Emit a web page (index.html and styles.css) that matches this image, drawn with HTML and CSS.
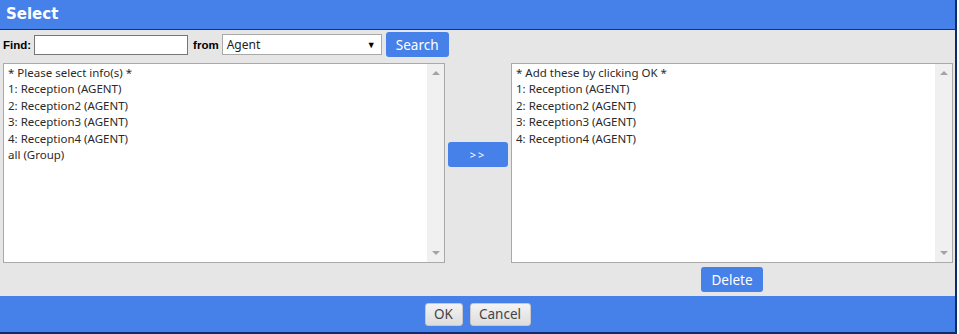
FILE: index.html
```html
<!DOCTYPE html>
<html lang="en">
<head>
    <meta charset="UTF-8">
    <title>Select</title>
    <link rel="stylesheet" href="styles.css">
</head>
<body class="page">
<div class="dialog">
    <div class="title">Select</div>
    <div class="body">
        <div class="find-row">
            <label class="lbl">Find:</label>
            <input class="find-input" type="text">
            <label class="lbl from">from</label>
            <div class="fake-select">
                <span>Agent</span>
                <span class="arrow">&#9660;</span>
            </div>
            <button class="btn-blue btn-search">Search</button>
        </div>
        <div class="lists">
            <div class="list">
                <div class="list-items">
                    <div>* Please select info(s) *</div>
                    <div>1: Reception (AGENT)</div>
                    <div>2: Reception2 (AGENT)</div>
                    <div>3: Reception3 (AGENT)</div>
                    <div>4: Reception4 (AGENT)</div>
                    <div>all (Group)</div>
                </div>
                <div class="scroll">
                    <span class="tri up"></span>
                    <span class="tri down"></span>
                </div>
            </div>
            <div class="middle">
                <button class="btn-blue btn-add">&gt;&gt;</button>
            </div>
            <div class="right-col">
                <div class="list">
                    <div class="list-items">
                        <div>* Add these by clicking OK *</div>
                        <div>1: Reception (AGENT)</div>
                        <div>2: Reception2 (AGENT)</div>
                        <div>3: Reception3 (AGENT)</div>
                        <div>4: Reception4 (AGENT)</div>
                    </div>
                    <div class="scroll">
                        <span class="tri up"></span>
                        <span class="tri down"></span>
                    </div>
                </div>
                <div class="delete-row">
                    <button class="btn-blue btn-delete">Delete</button>
                </div>
            </div>
        </div>
    </div>
    <div class="footer">
        <button class="btn-gray btn-ok">OK</button>
        <button class="btn-gray btn-cancel">Cancel</button>
    </div>
</div>
</body>
</html>
```

FILE: styles.css
```css
body {
    margin: 0;
    background: #ffffff;
    font-family: "Noto Sans", "Liberation Sans", sans-serif;
}

.dialog {
    width: 955px;
    height: 332px;
    border-right: 2px solid #0d2c6b;
    border-bottom: 2px solid #0d2c6b;
    display: flex;
    flex-direction: column;
    background: #e6e6e6;
}

.title {
    height: 30px;
    line-height: 29px;
    background: #4680e9;
    border-bottom: 1px solid #14346e;
    color: #ffffff;
    font-family: "DejaVu Sans", Verdana, sans-serif;
    font-weight: bold;
    font-size: 15px;
    padding-left: 6px;
    box-sizing: border-box;
}

.body {
    flex: 1;
    padding: 2px 2px 0 3px;
}

.find-row {
    display: flex;
    align-items: center;
    height: 25px;
}

.lbl {
    font-family: "Liberation Sans", Arial, sans-serif;
    font-weight: bold;
    font-size: 11.5px;
    color: #000000;
}

.find-input {
    width: 154px;
    height: 20px;
    box-sizing: border-box;
    margin: 0 5px 0 3px;
    border: 1px solid #767676;
    padding: 0;
}

.from {
    margin-right: 3px;
}

.fake-select {
    width: 160px;
    height: 21px;
    box-sizing: border-box;
    border: 1px solid #a9a9a9;
    background: #ffffff;
    display: flex;
    align-items: center;
    justify-content: space-between;
    padding: 0 5px 0 4px;
    font-size: 12px;
    color: #222222;
}

.arrow {
    font-size: 9px;
    color: #000000;
}

.btn-blue {
    background: #4680e9;
    color: #ffffff;
    border: none;
    border-radius: 3px;
    font-family: "Noto Sans", "Liberation Sans", sans-serif;
    padding: 0;
}

.btn-search {
    width: 63px;
    height: 25px;
    margin-left: 4px;
    font-size: 13.5px;
}

.lists {
    display: flex;
    margin-top: 6px;
}

.list {
    height: 200px;
    box-sizing: border-box;
    border: 1px solid #a9a9a9;
    background: #ffffff;
    display: flex;
}

.lists > .list {
    width: 443px;
}

.list-items {
    flex: 1;
    padding: 1px 4px;
    font-size: 11.5px;
    line-height: 16.4px;
    color: #2a2a2a;
}

.scroll {
    width: 17px;
    background: #f0f0f0;
    display: flex;
    flex-direction: column;
    justify-content: space-between;
    align-items: center;
    padding: 7px 0;
}

.tri {
    width: 0;
    height: 0;
    border-left: 4px solid transparent;
    border-right: 4px solid transparent;
}

.tri.up {
    border-bottom: 4px solid #a3a3a3;
}

.tri.down {
    border-top: 4px solid #a3a3a3;
}

.middle {
    width: 66px;
    display: flex;
    justify-content: center;
    padding-top: 79px;
}

.btn-add {
    width: 60px;
    height: 25px;
    font-size: 11px;
    letter-spacing: 2px;
}

.right-col {
    width: 442px;
}

.right-col .list {
    width: 442px;
}

.delete-row {
    display: flex;
    justify-content: center;
    margin-top: 4px;
}

.btn-delete {
    width: 62px;
    height: 25px;
    font-size: 13.5px;
}

.footer {
    height: 36px;
    background: #4680e9;
    display: flex;
    justify-content: center;
    align-items: center;
    gap: 7px;
}

.btn-gray {
    height: 23px;
    border: 1px solid #c8c8c8;
    border-radius: 3px;
    background: linear-gradient(#f4f4f4, #dcdcdc);
    color: #444444;
    font-family: "Noto Sans", "Liberation Sans", sans-serif;
    font-size: 13.5px;
    padding: 0;
}

.btn-ok {
    width: 38px;
}

.btn-cancel {
    width: 61px;
}
```
